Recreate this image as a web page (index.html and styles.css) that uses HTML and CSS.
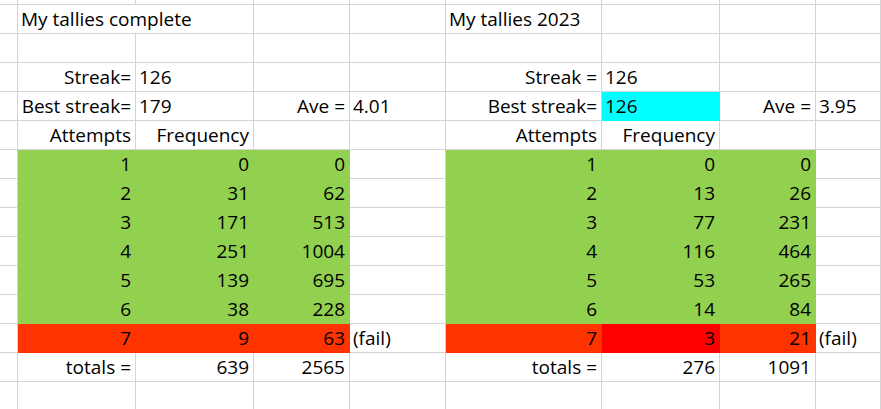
FILE: index.html
```html
<!DOCTYPE html>
<html lang="en">
<head>
<meta charset="utf-8">
<title>My tallies</title>
<link rel="stylesheet" href="styles.css">
</head>
<body>
<div class="sheet">
  <!-- row 0 (partial) -->
  <div class="c"></div><div class="c"></div><div class="c"></div><div class="c"></div><div class="c"></div><div class="c"></div><div class="c"></div><div class="c"></div><div class="c"></div>
  <!-- row 1 -->
  <div class="c"></div><div class="c l span2">My tallies complete</div><div class="c"></div><div class="c"></div><div class="c l">My tallies 2023</div><div class="c"></div><div class="c"></div><div class="c"></div>
  <!-- row 2 -->
  <div class="c"></div><div class="c"></div><div class="c"></div><div class="c"></div><div class="c"></div><div class="c"></div><div class="c"></div><div class="c"></div><div class="c"></div>
  <!-- row 3 -->
  <div class="c"></div><div class="c r">Streak=</div><div class="c l">126</div><div class="c"></div><div class="c"></div><div class="c r">Streak =</div><div class="c l">126</div><div class="c"></div><div class="c"></div>
  <!-- row 4 -->
  <div class="c"></div><div class="c r">Best streak=</div><div class="c l">179</div><div class="c r">Ave =</div><div class="c l">4.01</div><div class="c r">Best streak=</div><div class="c l cyan">126</div><div class="c r">Ave =</div><div class="c l">3.95</div>
  <!-- row 5 -->
  <div class="c"></div><div class="c r">Attempts</div><div class="c r">Frequency</div><div class="c"></div><div class="c"></div><div class="c r">Attempts</div><div class="c r">Frequency</div><div class="c"></div><div class="c"></div>
  <!-- rows 6-11 -->
  <div class="c"></div><div class="c r green">1</div><div class="c r green">0</div><div class="c r green">0</div><div class="c"></div><div class="c r green">1</div><div class="c r green">0</div><div class="c r green">0</div><div class="c"></div>
  <div class="c"></div><div class="c r green">2</div><div class="c r green">31</div><div class="c r green">62</div><div class="c"></div><div class="c r green">2</div><div class="c r green">13</div><div class="c r green">26</div><div class="c"></div>
  <div class="c"></div><div class="c r green">3</div><div class="c r green">171</div><div class="c r green">513</div><div class="c"></div><div class="c r green">3</div><div class="c r green">77</div><div class="c r green">231</div><div class="c"></div>
  <div class="c"></div><div class="c r green">4</div><div class="c r green">251</div><div class="c r green">1004</div><div class="c"></div><div class="c r green">4</div><div class="c r green">116</div><div class="c r green">464</div><div class="c"></div>
  <div class="c"></div><div class="c r green">5</div><div class="c r green">139</div><div class="c r green">695</div><div class="c"></div><div class="c r green">5</div><div class="c r green">53</div><div class="c r green">265</div><div class="c"></div>
  <div class="c"></div><div class="c r green">6</div><div class="c r green">38</div><div class="c r green">228</div><div class="c"></div><div class="c r green">6</div><div class="c r green">14</div><div class="c r green">84</div><div class="c"></div>
  <!-- row 12 -->
  <div class="c"></div><div class="c r red">7</div><div class="c r red">9</div><div class="c r red">63</div><div class="c l">(fail)</div><div class="c r red">7</div><div class="c r deep-red">3</div><div class="c r red">21</div><div class="c l">(fail)</div>
  <!-- row 13 -->
  <div class="c"></div><div class="c r">totals =</div><div class="c r">639</div><div class="c r">2565</div><div class="c"></div><div class="c r">totals =</div><div class="c r">276</div><div class="c r">1091</div><div class="c"></div>
  <!-- row 14 -->
  <div class="c"></div><div class="c"></div><div class="c"></div><div class="c"></div><div class="c"></div><div class="c"></div><div class="c"></div><div class="c"></div><div class="c"></div>
</div>
</body>
</html>
```
FILE: styles.css
```css
html, body {
  margin: 0;
  padding: 0;
  background: #ffffff;
  overflow: hidden;
}

.sheet {
  display: grid;
  grid-template-columns: 18px 118px 118px 96px 96px 156px 118px 96px 1fr;
  grid-template-rows: 5px repeat(14, 29px);
  width: 881px;
  height: 409px;
  font-family: "Open Sans", "Liberation Sans", sans-serif;
  font-size: 19px;
  color: #000000;
}

.c {
  box-sizing: border-box;
  border-right: 1px solid #d4d4d4;
  border-bottom: 1px solid #d4d4d4;
  line-height: 28px;
  white-space: nowrap;
  overflow: hidden;
}

.l {
  text-align: left;
  padding-left: 3px;
}

.r {
  text-align: right;
  padding-right: 4px;
}

.span2 {
  grid-column: span 2;
}

.green {
  background: #92d050;
  border-color: #92d050;
}

.red {
  background: #ff3300;
  border-color: #ff3300;
}

.deep-red {
  background: #ff0000;
  border-color: #ff0000;
}

.cyan {
  background: #00ffff;
  border-color: #00ffff;
}
```
